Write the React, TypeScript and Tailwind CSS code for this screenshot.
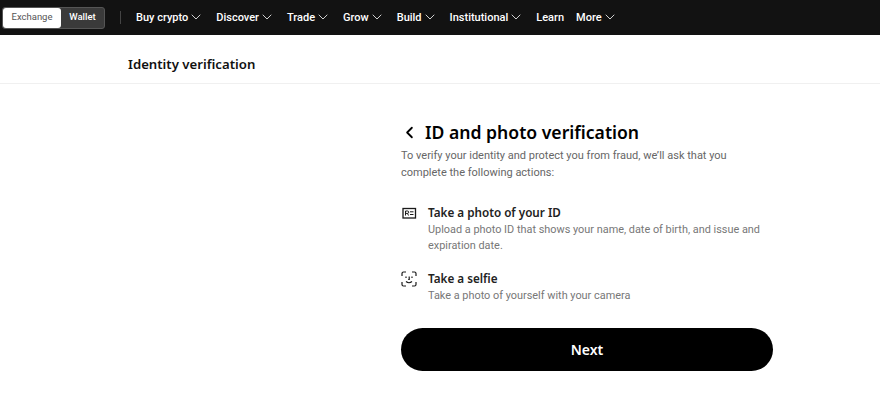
import { ChevronDown, ChevronLeft } from "lucide-react";

const navItems = [
  { label: "Buy crypto", menu: true },
  { label: "Discover", menu: true },
  { label: "Trade", menu: true },
  { label: "Grow", menu: true },
  { label: "Build", menu: true },
  { label: "Institutional", menu: true },
  { label: "Learn", menu: false },
  { label: "More", menu: true },
];

const IdIcon = () => (
  <svg width="16" height="16" viewBox="0 0 16 16" fill="none">
    <rect x="2" y="3.500" width="12.500" height="9.500" stroke="#1a1a1a" strokeWidth="1.300" />
    <path d="M4.500 10.500V6h2a1.100 1.100 0 0 1 0 2.400h-2M6.500 8.400l1 2.100" stroke="#1a1a1a" strokeWidth="1" />
    <path d="M9 6.800h3.500M9 9.500h3.500" stroke="#1a1a1a" strokeWidth="1" />
  </svg>
);

const FaceIcon = () => (
  <svg width="16" height="16" viewBox="0 0 16 16" fill="none" stroke="#1a1a1a" strokeWidth="1.200">
    <path d="M1 5V2.500A1.500 1.500 0 0 1 2.500 1H5M11 1h2.500A1.500 1.500 0 0 1 15 2.500V5M15 11v2.500A1.500 1.500 0 0 1 13.500 15H11M5 15H2.500A1.500 1.500 0 0 1 1 13.500V11" />
    <path d="M5 5.500v1.500M11 5.500v1.500M8.200 5.500v3H7.200M5 10.500c1.800 1.500 4.200 1.500 6 0" />
  </svg>
);

const steps = [
  {
    icon: <IdIcon />,
    title: "Take a photo of your ID",
    text: "Upload a photo ID that shows your name, date of birth, and issue and expiration date.",
  },
  {
    icon: <FaceIcon />,
    title: "Take a selfie",
    text: "Take a photo of yourself with your camera",
  },
];

export default function App() {
  return (
    <div className="h-[418px] w-[880px] overflow-hidden bg-white font-['Roboto',sans-serif]">
      <header className="flex h-[35px] items-center bg-[#121212] pl-[2px]">
        <div className="flex h-[22px] w-[103px] rounded-[3px] border border-[#555] bg-[#3a3a3a] text-[9.500px]">
          <div className="flex w-[58px] items-center justify-center rounded-[3px] bg-white text-[#555]">Exchange</div>
          <div className="flex flex-1 items-center justify-center font-medium text-white">Wallet</div>
        </div>
        <div className="mx-[15px] h-[13px] w-px bg-[#444]" />
        <nav className="flex items-center gap-[12px]">
          {navItems.map((item) => (
            <div key={item.label} className="flex items-center text-[11px] font-medium text-white">
              <span className="pt-[2px]">{item.label}</span>
              {item.menu && <ChevronDown size={16} strokeWidth={1.200} className="mb-[1px]" />}
            </div>
          ))}
        </nav>
      </header>

      <div className="flex h-[49px] items-center border-b border-[#f0f0f0] pl-[128px] pt-[11px] font-['Noto_Sans',sans-serif] text-[13.200px] font-semibold text-[#111]">
        Identity verification
      </div>

      <main className="ml-[401px] w-[372px] pt-[35px]">
        <div className="flex items-center">
          <ChevronLeft size={19} strokeWidth={2.250} className="-ml-[1px] text-black" />
          <h1 className="ml-[6px] font-['Noto_Sans',sans-serif] text-[17.600px] leading-[26px] font-semibold text-black">
            ID and photo verification
          </h1>
        </div>
        <p className="mt-[2px] text-[11px] leading-[17px] text-[#666]">
          To verify your identity and protect you from fraud, we’ll ask that you complete the following actions:
        </p>

        <div className="mt-[22px] flex flex-col gap-[15px]">
          {steps.map((step) => (
            <div key={step.title} className="flex">
              <div className="flex w-[27px] shrink-0 items-start pt-[2px]">{step.icon}</div>
              <div>
                <h2 className="font-['Noto_Sans',sans-serif] text-[11.700px] leading-[18px] font-semibold text-[#222]">
                  {step.title}
                </h2>
                <p className="mt-[1px] text-[10.900px] leading-[16px] text-[#777]">{step.text}</p>
              </div>
            </div>
          ))}
        </div>

        <button className="mt-[24px] flex h-[43px] w-full items-center justify-center rounded-full bg-black font-['Noto_Sans',sans-serif] text-[14px] font-semibold text-white">
          Next
        </button>
      </main>
    </div>
  );
}
